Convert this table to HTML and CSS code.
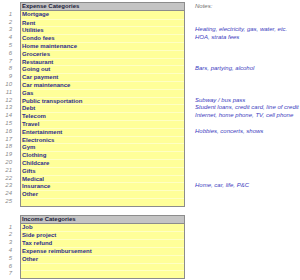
FILE: index.html
```html
<!DOCTYPE html>
<html>
<head>
<meta charset="utf-8">
<link rel="stylesheet" href="styles.css">
</head>
<body>
<div class="page">
  <div class="block expense">
    <div class="nums">
      <div class="cell"></div>
      <div class="cell">1</div><div class="cell">2</div><div class="cell">3</div><div class="cell">4</div><div class="cell">5</div>
      <div class="cell">6</div><div class="cell">7</div><div class="cell">8</div><div class="cell">9</div><div class="cell">10</div>
      <div class="cell">11</div><div class="cell">12</div><div class="cell">13</div><div class="cell">14</div><div class="cell">15</div>
      <div class="cell">16</div><div class="cell">17</div><div class="cell">18</div><div class="cell">19</div><div class="cell">20</div>
      <div class="cell">21</div><div class="cell">22</div><div class="cell">23</div><div class="cell">24</div><div class="cell">25</div>
    </div>
    <div class="box">
      <div class="cell head">Expense Categories</div>
      <div class="cell">Mortgage</div>
      <div class="cell">Rent</div>
      <div class="cell">Utilities</div>
      <div class="cell">Condo fees</div>
      <div class="cell">Home maintenance</div>
      <div class="cell">Groceries</div>
      <div class="cell">Restaurant</div>
      <div class="cell">Going out</div>
      <div class="cell">Car payment</div>
      <div class="cell">Car maintenance</div>
      <div class="cell">Gas</div>
      <div class="cell">Public transportation</div>
      <div class="cell">Debt</div>
      <div class="cell">Telecom</div>
      <div class="cell">Travel</div>
      <div class="cell">Entertainment</div>
      <div class="cell">Electronics</div>
      <div class="cell">Gym</div>
      <div class="cell">Clothing</div>
      <div class="cell">Childcare</div>
      <div class="cell">Gifts</div>
      <div class="cell">Medical</div>
      <div class="cell">Insurance</div>
      <div class="cell">Other</div>
      <div class="cell"></div>
    </div>
    <div class="notes">
      <div class="cell label">Notes:</div>
      <div class="cell"></div>
      <div class="cell"></div>
      <div class="cell">Heating, electricity, gas, water, etc.</div>
      <div class="cell">HOA, strata fees</div>
      <div class="cell"></div>
      <div class="cell"></div>
      <div class="cell"></div>
      <div class="cell">Bars, partying, alcohol</div>
      <div class="cell"></div>
      <div class="cell"></div>
      <div class="cell"></div>
      <div class="cell">Subway / bus pass</div>
      <div class="cell">Student loans, credit card, line of credit</div>
      <div class="cell">Internet, home phone, TV, cell phone</div>
      <div class="cell"></div>
      <div class="cell">Hobbies, concerts, shows</div>
      <div class="cell"></div>
      <div class="cell"></div>
      <div class="cell"></div>
      <div class="cell"></div>
      <div class="cell"></div>
      <div class="cell"></div>
      <div class="cell">Home, car, life, P&amp;C</div>
    </div>
  </div>

  <div class="block income">
    <div class="nums">
      <div class="cell"></div>
      <div class="cell">1</div><div class="cell">2</div><div class="cell">3</div><div class="cell">4</div>
      <div class="cell">5</div><div class="cell">6</div><div class="cell">7</div>
    </div>
    <div class="box">
      <div class="cell head">Income Categories</div>
      <div class="cell">Job</div>
      <div class="cell">Side project</div>
      <div class="cell">Tax refund</div>
      <div class="cell">Expense reimbursement</div>
      <div class="cell">Other</div>
      <div class="cell"></div>
      <div class="cell"></div>
    </div>
  </div>
</div>
</body>
</html>
```

FILE: styles.css
```css
html, body {
  margin: 0;
  padding: 0;
  background: #ffffff;
}

.page {
  width: 300px;
  height: 280px;
  padding-top: 2px;
  box-sizing: border-box;
  font-family: "Liberation Sans", Arial, sans-serif;
  font-size: 6px;
}

.block {
  display: flex;
  align-items: flex-start;
}

.income {
  margin-top: 8px;
}

.cell {
  height: 7.8px;
  line-height: 7.8px;
  white-space: nowrap;
  box-sizing: border-box;
}

.nums {
  width: 12px;
  margin-top: 1px;
  text-align: right;
  font-style: italic;
  color: #8a8a8a;
}

.box {
  margin-left: 8px;
  width: 163px;
  border: 1px solid #8c8c8c;
  background: #ffff99;
  font-weight: bold;
  color: #2e2e8c;
}

.box .cell {
  padding-left: 1px;
  border-top: 1px solid #ffffc4;
  line-height: 6.8px;
}

.box .cell.head {
  background: #c4c4c4;
  color: #1a1a3a;
  border-top: none;
  border-bottom: 1px solid #8c8c8c;
  line-height: 7px;
}

.box .cell.head + .cell {
  border-top: none;
}

.notes {
  margin-left: 10px;
  margin-top: 1px;
  font-style: italic;
  color: #3c3cc0;
}

.notes .label {
  color: #707070;
}
```
